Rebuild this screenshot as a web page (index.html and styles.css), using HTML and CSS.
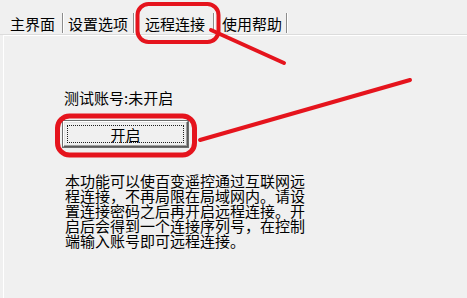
FILE: index.html
```html
<!DOCTYPE html>
<html lang="zh-CN">
<head>
<meta charset="utf-8">
<title>远程连接</title>
<link rel="stylesheet" href="styles.css">
</head>
<body>
  <div class="dialog">
    <div class="tabs">
      <div class="tab t1">主界面</div>
      <div class="tab t2">设置选项</div>
      <div class="tab t3 active">远程连接</div>
      <div class="tab t4">使用帮助</div>
    </div>
    <div class="panel">
      <div class="status">测试账号:未开启</div>
      <button class="btn"><span class="focus">开启</span></button>
      <p class="desc">本功能可以使百变遥控通过互联网远程连接，不再局限在局域网内。请设置连接密码之后再开启远程连接。开启后会得到一个连接序列号，在控制端输入账号即可远程连接。</p>
    </div>
  </div>
  <svg class="annot" width="467" height="298" viewBox="0 0 467 298">
    <rect x="137.5" y="4" width="81" height="38" rx="11" ry="11" fill="none" stroke="#e5141d" stroke-width="4"/>
    <line x1="211" y1="30" x2="284" y2="63" stroke="#e5141d" stroke-width="4" stroke-linecap="round"/>
    <rect x="57.5" y="116" width="137" height="39" rx="12" ry="12" fill="none" stroke="#e5141d" stroke-width="5"/>
    <line x1="200" y1="140" x2="410" y2="80" stroke="#e5141d" stroke-width="4" stroke-linecap="round"/>
  </svg>
</body>
</html>
```

FILE: styles.css
```css
html, body {
  margin: 0;
  padding: 0;
}
body {
  width: 467px;
  height: 298px;
  overflow: hidden;
  position: relative;
  background: #f0f0f0;
  font-family: "Noto Sans CJK SC", "Noto Sans", sans-serif;
  font-size: 15px;
  color: #000;
}
.dialog {
  display: flex;
  flex-direction: column;
  height: 298px;
}
.tabs {
  display: flex;
  align-items: flex-start;
  height: 35px;
  box-sizing: border-box;
  padding: 13px 0 0 4px;
  border-bottom: 1px solid #dcdcdc;
}
.tab {
  height: 20px;
  line-height: 18px;
  padding-top: 2px;
  box-sizing: border-box;
  border-right: 1px solid #8c8c8c;
  box-shadow: 1px 0 0 #ffffff;
  white-space: nowrap;
}
.t1 { padding-left: 6px; padding-right: 7px; }
.t2 { padding-left: 5px; padding-right: 5px; }
.t3 { padding-left: 11px; padding-right: 8px; }
.t4 { padding-left: 8px; padding-right: 4px; }
.panel {
  flex: 1;
  margin-left: 3px;
  border-left: 1px solid #ffffff;
  border-top: 1px solid #ffffff;
  padding-left: 60px;
  padding-top: 54px;
}
.status {
  line-height: 15px;
  height: 15px;
}
.btn {
  display: block;
  margin: 16px 0 0 -1px;
  width: 125px;
  height: 26px;
  padding: 3px;
  box-sizing: border-box;
  background: #f0f0f0;
  border: 1px solid;
  border-color: #ffffff #5a5a5a #5a5a5a #ffffff;
  box-shadow: inset -1px -1px 0 #a0a0a0, inset 1px 1px 0 #e3e3e3, 0 0 0 1px #6e6e6e;
  font-family: inherit;
  font-size: 15px;
  color: #000;
  cursor: default;
}
.focus {
  display: flex;
  align-items: center;
  justify-content: center;
  height: 100%;
  box-sizing: border-box;
  border: 1px dotted #202020;
  line-height: 15px;
  padding-top: 1px;
}
.desc {
  margin: 26px 0 0 1px;
  width: 241px;
  line-height: 15px;
  line-break: strict;
}
.annot {
  position: absolute;
  left: 0;
  top: 0;
  pointer-events: none;
}
```
